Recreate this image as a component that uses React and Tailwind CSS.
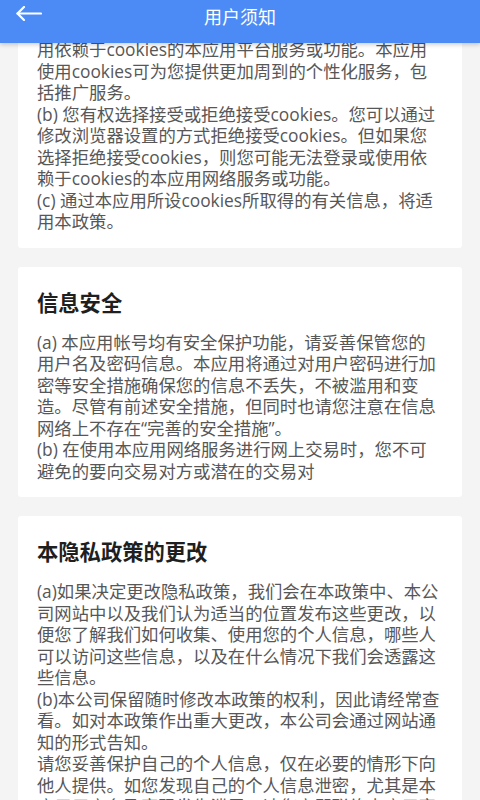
const sections = [
  {
    title: 'Cookies的使用',
    paragraphs: [
      '(a) 在您未拒绝接受cookies的情况下，本应用会在您的计算机上设定或取用cookies，以便您能登录或使用依赖于cookies的本应用平台服务或功能。本应用使用cookies可为您提供更加周到的个性化服务，包括推广服务。',
      '(b) 您有权选择接受或拒绝接受cookies。您可以通过修改浏览器设置的方式拒绝接受cookies。但如果您选择拒绝接受cookies，则您可能无法登录或使用依赖于cookies的本应用网络服务或功能。',
      '(c) 通过本应用所设cookies所取得的有关信息，将适用本政策。',
    ],
  },
  {
    title: '信息安全',
    paragraphs: [
      '(a) 本应用帐号均有安全保护功能，请妥善保管您的用户名及密码信息。本应用将通过对用户密码进行加密等安全措施确保您的信息不丢失，不被滥用和变造。尽管有前述安全措施，但同时也请您注意在信息网络上不存在“完善的安全措施”。',
      '(b) 在使用本应用网络服务进行网上交易时，您不可避免的要向交易对方或潜在的交易对',
    ],
  },
  {
    title: '本隐私政策的更改',
    paragraphs: [
      '(a)如果决定更改隐私政策，我们会在本政策中、本公司网站中以及我们认为适当的位置发布这些更改，以便您了解我们如何收集、使用您的个人信息，哪些人可以访问这些信息，以及在什么情况下我们会透露这些信息。',
      '(b)本公司保留随时修改本政策的权利，因此请经常查看。如对本政策作出重大更改，本公司会通过网站通知的形式告知。',
      '请您妥善保护自己的个人信息，仅在必要的情形下向他人提供。如您发现自己的个人信息泄密，尤其是本应用用户名及密码发生泄露，请您立即联络本应用客服，以便本应用采取相应措施。',
    ],
  },
]

function Header() {
  return (
    <header className="relative z-10 h-[43px] bg-[#4c8bf5] shadow-[0_2px_4px_rgba(0,0,0,0.18)] grid grid-cols-[1fr_auto_1fr]">
      <button className="justify-self-start pl-4 pt-[6px] h-fit cursor-pointer">
        <svg width="26" height="15" viewBox="0 0 26 15" fill="none" stroke="white" strokeWidth="2.2" strokeLinecap="round" strokeLinejoin="round">
          <path d="M1.5 7.5 H25" />
          <path d="M8 1 L1.5 7.5 L8 14" />
        </svg>
      </button>
      <h1 className="pt-[5px] text-[18px] leading-[24px] text-white">用户须知</h1>
      <div />
    </header>
  )
}

function Section({ title, paragraphs }) {
  return (
    <section className="bg-white rounded-[3px] pl-[19px] pr-[21px] pt-[21px] pb-[15px]">
      <h2 className="text-[21.3px] leading-[30px] font-bold text-[#1f1f1f]">{title}</h2>
      <div className="mt-[14px] text-[17.35px] leading-[21.5px] text-[#575757]">
        {paragraphs.map((text, i) => (
          <p key={i}>{text}</p>
        ))}
      </div>
    </section>
  )
}

export default function App() {
  return (
    <div className="h-[800px] overflow-hidden bg-[#f4f4f4] font-['Open_Sans','Noto_Sans_CJK_SC',sans-serif]">
      <Header />
      <main className="-mt-[112px] px-[18px] flex flex-col gap-[19px]">
        {sections.map(s => (
          <Section key={s.title} {...s} />
        ))}
      </main>
    </div>
  )
}
